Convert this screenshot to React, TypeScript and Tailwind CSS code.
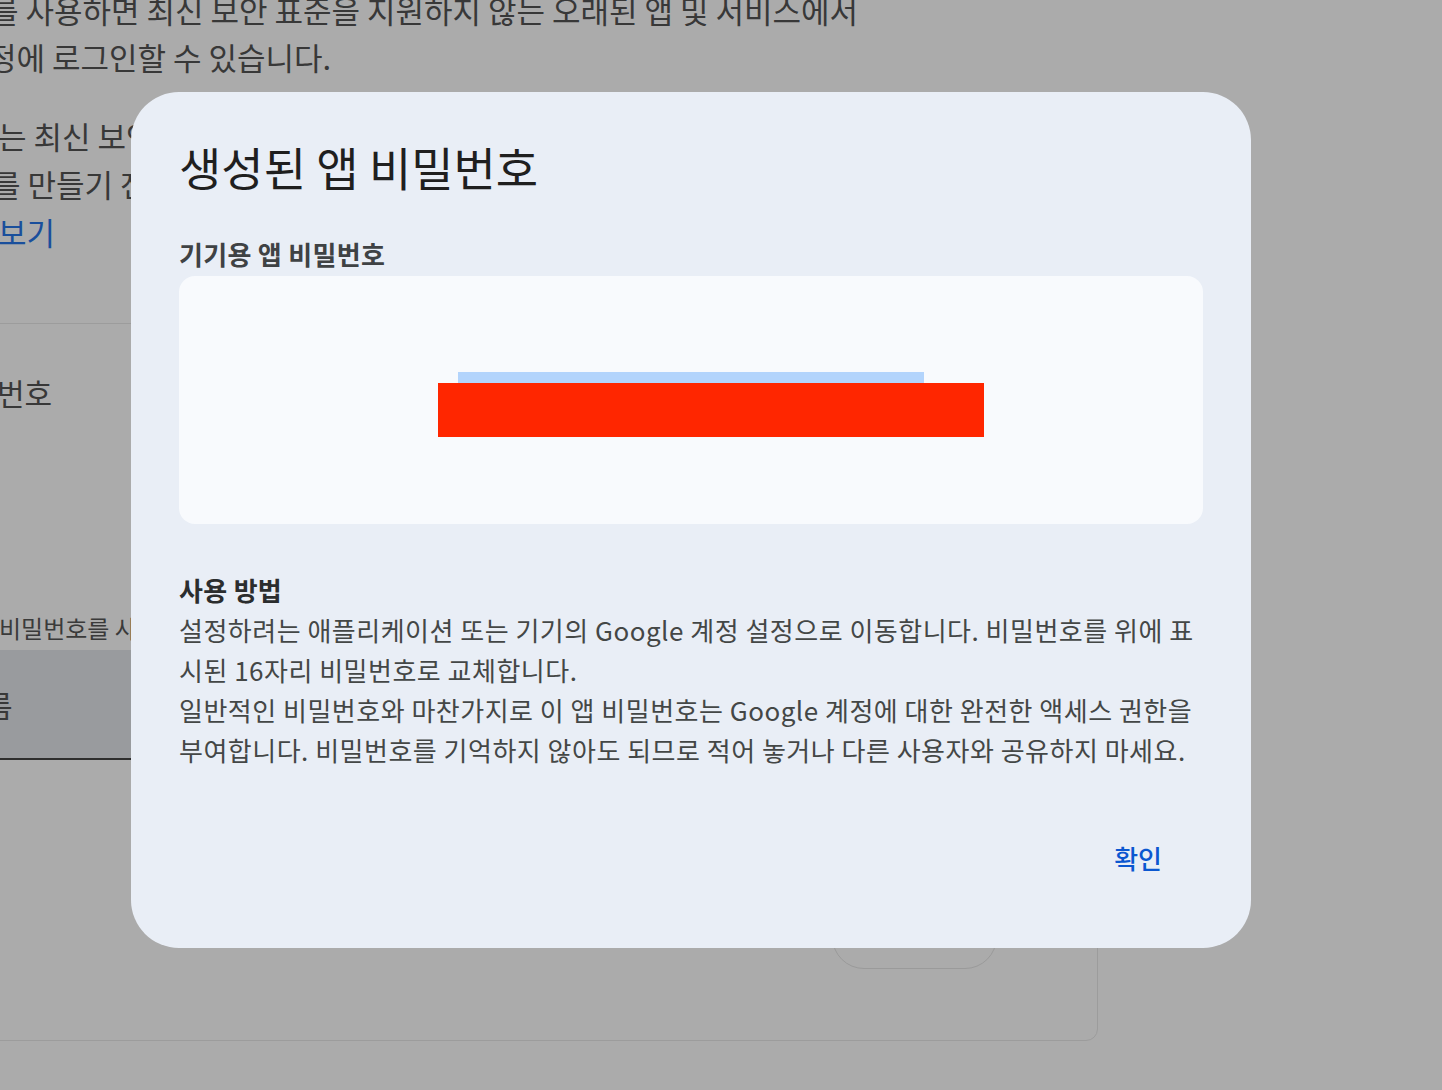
import React from 'react'

function BackgroundPage() {
  return (
    <div className="flex flex-col text-[#383838]">
      {/* intro copy, cut off on the left by the viewport */}
      <div className="mt-[-14px] text-[31px] leading-[48px] whitespace-nowrap">
        <p className="ml-[-10px]">를 사용하면 최신 보안 표준을 지원하지 않는 오래된 앱 및 서비스에서</p>
        <p className="ml-[-12px] mt-[-1px]">정에 로그인할 수 있습니다.</p>
        <div className="mt-[31px]">
          <p className="ml-[-2px]">는 최신 보안 표준을 지원하지 않습니다.</p>
          <p className="ml-[-8px]">를 만들기 전에 먼저</p>
          <p className="ml-[-2px] text-[#1a4f9c]">보기</p>
        </div>
      </div>

      {/* settings card; its top border is the rule at y=323 */}
      <div className="mt-[67px] ml-[-40px] w-[1138px] h-[718px] rounded-xl border border-[#9c9c9c] flex flex-col">
        <p className="pl-[36px] pt-[47px] text-[30px] leading-[42px] whitespace-nowrap">번호</p>

        <p className="pl-[38px] mt-[197px] text-[24px] leading-[36px] whitespace-nowrap text-[#3a3a3a]">비밀번호를 사용할 앱 이름을 입력하세요</p>

        <div className="mt-[4px] h-[110px] w-[420px] bg-[#999b9e] border-b-2 border-[#2e2e2e] flex items-center pl-[32px]">
          <span className="text-[30px] leading-[40px] ml-[-8px]">름</span>
        </div>

        <div className="mt-auto flex justify-end pr-[100px] pb-[71px]">
          <div className="w-[165px] h-[80px] rounded-[32px] border border-[#9a9a9a]" />
        </div>
      </div>
    </div>
  )
}

function PasswordDialog() {
  return (
    <div className="absolute left-[131px] top-[92px] w-[1120px] h-[856px] rounded-[48px] bg-[#e9eef6] flex flex-col px-12 pt-[44px]">
      <h1 className="text-[46px] leading-[60px] text-[#1f1f1f] font-normal">생성된 앱 비밀번호</h1>

      <p className="mt-[41px] text-[26px] leading-[34px] font-bold text-[#3f4244] tracking-[0.3px]">기기용 앱 비밀번호</p>

      <div className="relative mt-[5px] h-[248px] rounded-2xl bg-[#f8fafd] flex items-center justify-center">
        <div className="w-[466px] h-[56px] bg-[#b3d4fc]" />
        {/* redaction block over the password */}
        <div className="absolute left-[259px] top-[107px] w-[546px] h-[54px] bg-[#ff2600]" />
      </div>

      <h2 className="mt-[46px] text-[26px] leading-[40px] font-bold text-[#2b2d2e] tracking-[0.3px]">사용 방법</h2>
      <div className="text-[26px] leading-[40px] text-[#444746] whitespace-nowrap tracking-[0.5px]">
        <p>설정하려는 애플리케이션 또는 기기의 Google 계정 설정으로 이동합니다. 비밀번호를 위에 표</p>
        <p>시된 16자리 비밀번호로 교체합니다.</p>
        <p>일반적인 비밀번호와 마찬가지로 이 앱 비밀번호는 Google 계정에 대한 완전한 액세스 권한을</p>
        <p>부여합니다. 비밀번호를 기억하지 않아도 되므로 적어 놓거나 다른 사용자와 공유하지 마세요.</p>
      </div>

      <div className="mt-[63px] flex justify-end pr-[17px]">
        <button className="h-[48px] px-6 rounded-full text-[26px] font-medium text-[#0b57d0]">확인</button>
      </div>
    </div>
  )
}

export default function App() {
  return (
    <div className="relative w-[1442px] h-[1090px] overflow-hidden bg-[#ababab] font-['Noto_Sans_CJK_KR','Noto_Sans',sans-serif]">
      <BackgroundPage />
      <PasswordDialog />
    </div>
  )
}
